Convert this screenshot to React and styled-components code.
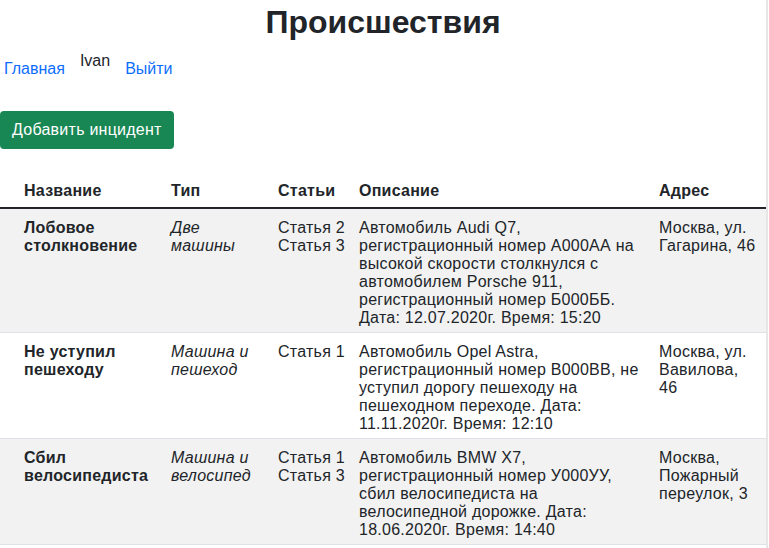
import React from 'react'
import styled, { createGlobalStyle } from 'styled-components'

const incidents = [
    {
        name: 'Лобовое столкновение',
        type: 'Две машины',
        articles: ['Статья 2', 'Статья 3'],
        description: 'Автомобиль Audi Q7, регистрационный номер А000АА на высокой скорости столкнулся с автомобилем Porsche 911, регистрационный номер Б000ББ. Дата: 12.07.2020г. Время: 15:20',
        address: 'Москва, ул. Гагарина, 46',
    },
    {
        name: 'Не уступил пешеходу',
        type: 'Машина и пешеход',
        articles: ['Статья 1'],
        description: 'Автомобиль Opel Astra, регистрационный номер В000ВВ, не уступил дорогу пешеходу на пешеходном переходе. Дата: 11.11.2020г. Время: 12:10',
        address: 'Москва, ул. Вавилова, 46',
    },
    {
        name: 'Сбил велосипедиста',
        type: 'Машина и велосипед',
        articles: ['Статья 1', 'Статья 3'],
        description: 'Автомобиль BMW X7, регистрационный номер У000УУ, сбил велосипедиста на велосипедной дорожке. Дата: 18.06.2020г. Время: 14:40',
        address: 'Москва, Пожарный переулок, 3',
    },
]

const columns = [16, 147, 107, 81, 300, 115]

function App() {
    return (
        <Page>
            <GlobalStyle />
            <Title>Происшествия</Title>

            <Nav>
                <NavLink href="#">Главная</NavLink>
                <UserName>Ivan</UserName>
                <NavLink href="#">Выйти</NavLink>
            </Nav>

            <AddButton>Добавить инцидент</AddButton>

            <Table>
                <colgroup>
                    {columns.map((w, i) => <Col key={i} $width={w} />)}
                </colgroup>
                <thead>
                    <tr>
                        <Th></Th>
                        <Th>Название</Th>
                        <Th>Тип</Th>
                        <Th>Статьи</Th>
                        <Th>Описание</Th>
                        <Th>Адрес</Th>
                    </tr>
                </thead>
                <tbody>
                    {incidents.map((item, i) => (
                        <Row key={i} $striped={i % 2 === 0}>
                            <Td></Td>
                            <NameCell>{item.name}</NameCell>
                            <TypeCell>{item.type}</TypeCell>
                            <Td>
                                {item.articles.map(a => <Article key={a}>{a}</Article>)}
                            </Td>
                            <Td>{item.description}</Td>
                            <Td>{item.address}</Td>
                        </Row>
                    ))}
                </tbody>
            </Table>
        </Page>
    )
}

export default App

const GlobalStyle = createGlobalStyle`
body{
    margin:0;
    background:#fff;
    color:#212529;
    font-family:"Liberation Sans", Arial, sans-serif;
    font-size:16px;
    letter-spacing:0.25px;
}

`
const Page = styled.div`
width:766px;
min-height:100vh;
border-right:2px solid #e6e6e6;

`
const Title = styled.h1`
margin:0 0 10px;
padding-top:3px;
text-align:center;
font-size:32px;
font-weight:700;
letter-spacing:0;
line-height:1.2;
color:#212529;

`
const Nav = styled.div`
display:flex;
align-items:flex-start;
gap:11px;
height:35px;
letter-spacing:0;

`
const NavLink = styled.a`
padding:8px 4px;
line-height:19px;
color:#0d6efd;
text-decoration:none;

`
const UserName = styled.span`
line-height:19px;

`
const AddButton = styled.button`
display:block;
margin-top:25px;
padding:6px 12px;
border:none;
border-radius:4px;
background:#198754;
color:#fff;
font-family:inherit;
font-size:16px;
letter-spacing:inherit;
line-height:26px;
cursor:pointer;

`
const Table = styled.table`
margin-top:26px;
width:766px;
table-layout:fixed;
border-collapse:collapse;
line-height:18px;

`
const Col = styled.col`
width:${p => p.$width}px;

`
const Th = styled.th`
padding:7px 8px;
text-align:left;
font-weight:700;
border-bottom:2px solid #212529;

`
const Row = styled.tr`
background:${p => p.$striped ? '#f2f2f2' : '#fff'};
border-bottom:1px solid #dee2e6;

`
const Td = styled.td`
padding:10px 8px 5px;
vertical-align:top;

`
const NameCell = styled(Td)`
font-weight:700;

`
const TypeCell = styled(Td)`
font-style:italic;

`
const Article = styled.div`
white-space:nowrap;

`
